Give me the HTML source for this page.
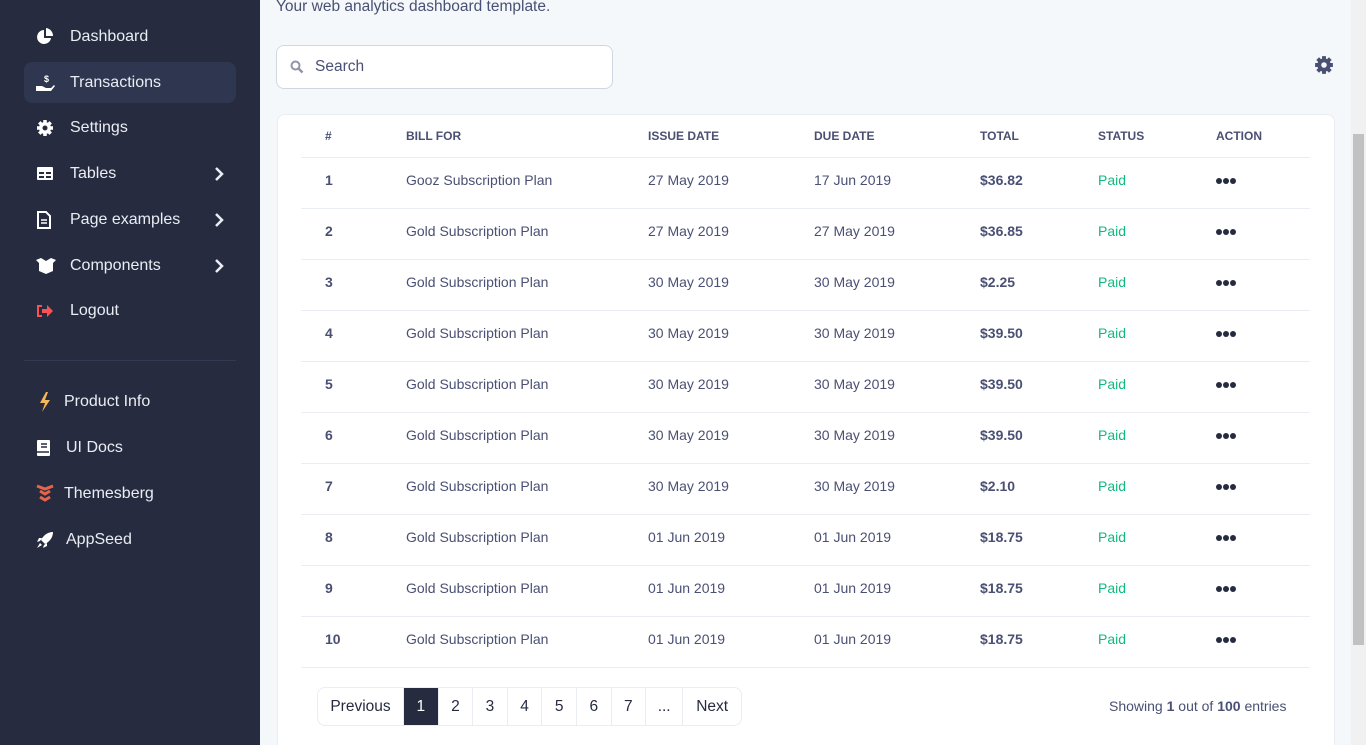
<!DOCTYPE html>
<html><head><meta charset="utf-8"><style>
*{box-sizing:border-box;margin:0;padding:0}
html,body{width:1366px;height:745px;overflow:hidden}
body{background:#f5f8fb;font-family:"Liberation Sans",sans-serif;color:#4a5073;position:relative}
.sb{position:absolute;left:0;top:0;width:260px;height:745px;background:#262b40}
.it{position:absolute;left:24px;width:212px;height:41px;border-radius:8px;color:#eaedf2;font-size:16px;display:flex;align-items:center}
.it.act{background:#2e3650}
.it svg{position:absolute;left:12px}
.it span{position:absolute;left:46px;top:12px}
.it .chev{left:188px;width:10px;height:14px}
.hr{position:absolute;left:24px;top:360px;width:212px;height:1px;background:#323a54}
.sub{position:absolute;left:276px;top:-2px;font-size:15.5px;color:#4a5073}
.search{position:absolute;left:276px;top:45px;width:337px;height:44px;border:1px solid #d1d7e0;border-radius:8px;background:#fff}
.search span{position:absolute;left:38px;top:12px;font-size:15.5px;color:#4a5073}
.card{position:absolute;left:277px;top:114px;width:1058px;height:640px;background:#fff;border:1px solid #eaedf2;border-radius:8px}
table{position:absolute;left:23px;top:0;width:1009px;border-collapse:collapse;font-size:14px}
th{height:42px;text-align:left;font-size:12px;font-weight:bold;color:#4a5073;border-bottom:1px solid #eaedf2;padding-left:24px}
td{height:51px;border-bottom:1px solid #eaedf2;padding-left:24px;color:#4a5073;padding-bottom:6px}
td.b{font-weight:bold}
td.p{color:#10b981}
.dots{display:inline-block;width:6px;height:6px;border-radius:50%;background:#262b40;margin-right:1px;vertical-align:middle}
.pg{position:absolute;left:317px;top:687px;height:39px;display:flex;border:1px solid #eaedf2;border-radius:8px;overflow:hidden;background:#fff}
.pg div{height:37px;line-height:37px;width:34.6px;text-align:center;border-right:1px solid #eaedf2;font-size:15.5px;color:#262b40}
.pg div:last-child{border:none}
.pg .on{background:#262b40;color:#fff}
.show{position:absolute;left:1109px;top:698px;font-size:14px;color:#4a5073}
.scr{position:absolute;left:1351px;top:0;width:15px;height:745px;background:#f1f1f1}
.th{position:absolute;left:1353px;top:134px;width:11px;height:511px;background:#c1c1c1}
</style></head><body>
<div class="sb">
<div class="it" style="top:16px"><svg width="18" height="18" viewBox="0 0 18 18"><path d="M8 2A7 7 0 1 0 15 10H8Z" fill="#fff"/><path d="M10 0V8H17A8 8 0 0 0 10 0Z" fill="#fff"/></svg><span>Dashboard</span></div>
<div class="it act" style="top:62px"><svg width="20" height="18" viewBox="0 0 20 18"><text x="8" y="8" font-size="9" fill="#fff" font-weight="bold">$</text><path d="M0 12h6l4 2h5l3-3 1 1-4 5H0Z" fill="#fff"/></svg><span>Transactions</span></div>
<div class="it" style="top:107px"><svg width="18" height="18" viewBox="0 0 18 18"><circle cx="9" cy="9" r="6" fill="#fff"/><g stroke="#fff" stroke-width="3.5"><path d="M9 1v16M1 9h16M3.3 3.3l11.4 11.4M14.7 3.3L3.3 14.7"/></g><circle cx="9" cy="9" r="2.5" fill="#262b40"/></svg><span>Settings</span></div>
<div class="it" style="top:153px"><svg width="18" height="16" viewBox="0 0 18 16"><rect x="1" y="1" width="16" height="13" rx="1" fill="#fff"/><path d="M3 6h5v2H3zM10 6h5v2h-5zM3 10h5v2H3zM10 10h5v2h-5z" fill="#262b40"/></svg><span>Tables</span><svg class="chev" viewBox="0 0 10 14" style="left:190px"><path d="M2 1l6 6-6 6" stroke="#eaedf2" stroke-width="2.5" fill="none"/></svg></div>
<div class="it" style="top:199px"><svg width="16" height="18" viewBox="0 0 16 18"><path d="M2 1h8l4 4v12H2Z" fill="none" stroke="#fff" stroke-width="2"/><path d="M5 9h6M5 12h6" stroke="#fff" stroke-width="1.5"/></svg><span>Page examples</span><svg class="chev" viewBox="0 0 10 14" style="left:190px"><path d="M2 1l6 6-6 6" stroke="#eaedf2" stroke-width="2.5" fill="none"/></svg></div>
<div class="it" style="top:245px"><svg width="20" height="16" viewBox="0 0 20 16"><path d="M0 2l5-2 5 3 5-3 5 2-3 3v8l-7 3-7-3V5Z" fill="#fff"/></svg><span>Components</span><svg class="chev" viewBox="0 0 10 14" style="left:190px"><path d="M2 1l6 6-6 6" stroke="#eaedf2" stroke-width="2.5" fill="none"/></svg></div>
<div class="it" style="top:290px"><svg width="18" height="16" viewBox="0 0 18 16"><path d="M1 2h5v2H3v8h3v2H1Z M6 6h5V2l6 6-6 6v-4H6Z" fill="#fa5252"/></svg><span>Logout</span></div>
<div class="hr"></div>
<div class="it" style="top:381px"><svg width="14" height="20" viewBox="0 0 14 20" style="left:14px"><path d="M8 0L2 11h5l-3 9 8-12H7l3-8Z" fill="#f5b759"/></svg><span style="left:40px">Product Info</span></div>
<div class="it" style="top:427px"><svg width="16" height="18" viewBox="0 0 16 18" style="left:12px"><rect x="1" y="1" width="13" height="16" rx="1" fill="#fff"/><path d="M5 5h6M5 8h6" stroke="#262b40" stroke-width="1.5"/><path d="M1 13h12" stroke="#262b40" stroke-width="1.5"/></svg><span style="left:42px">UI Docs</span></div>
<div class="it" style="top:473px"><svg width="18" height="20" viewBox="0 0 18 20" style="left:12px"><path d="M1 2l8 3 8-3M4 7l5 3 5-3M4 13l5 3 5-3" stroke="#e5654b" stroke-width="3" fill="none"/></svg><span style="left:40px">Themesberg</span></div>
<div class="it" style="top:519px"><svg width="18" height="18" viewBox="0 0 18 18" style="left:12px"><path d="M17 1C11 1 7 5 5 9l4 4c4-2 8-6 8-12Z M4 10l-3 1 2-4h3Z M8 14l-1 3 4-2v-3Z M4 12l-3 5 5-3Z" fill="#fff"/></svg><span style="left:42px">AppSeed</span></div>
</div>
<div class="sub">Your web analytics dashboard template.</div>
<div class="search"><svg width="14" height="14" viewBox="0 0 14 14" style="position:absolute;left:13px;top:14px"><circle cx="5.5" cy="5.5" r="4" fill="none" stroke="#8f95aa" stroke-width="2"/><path d="M8.5 8.5l4 4" stroke="#8f95aa" stroke-width="2.5"/></svg><span>Search</span></div>
<svg width="20" height="20" viewBox="0 0 18 18" style="position:absolute;left:1314px;top:55px"><circle cx="9" cy="9" r="6" fill="#4a5073"/><g stroke="#4a5073" stroke-width="3.5"><path d="M9 1v16M1 9h16M3.3 3.3l11.4 11.4M14.7 3.3L3.3 14.7"/></g><circle cx="9" cy="9" r="2.5" fill="#f5f8fb"/></svg>
<div class="card"><table>
<tr><th style="width:81px">#</th><th style="width:242px">BILL FOR</th><th style="width:166px">ISSUE DATE</th><th style="width:166px">DUE DATE</th><th style="width:118px">TOTAL</th><th style="width:118px">STATUS</th><th>ACTION</th></tr>
<tr><td class="b">1</td><td>Gooz Subscription Plan</td><td>27 May 2019</td><td>17 Jun 2019</td><td class="b">$36.82</td><td class="p">Paid</td><td><i class="dots"></i><i class="dots"></i><i class="dots"></i></td></tr>
<tr><td class="b">2</td><td>Gold Subscription Plan</td><td>27 May 2019</td><td>27 May 2019</td><td class="b">$36.85</td><td class="p">Paid</td><td><i class="dots"></i><i class="dots"></i><i class="dots"></i></td></tr>
<tr><td class="b">3</td><td>Gold Subscription Plan</td><td>30 May 2019</td><td>30 May 2019</td><td class="b">$2.25</td><td class="p">Paid</td><td><i class="dots"></i><i class="dots"></i><i class="dots"></i></td></tr>
<tr><td class="b">4</td><td>Gold Subscription Plan</td><td>30 May 2019</td><td>30 May 2019</td><td class="b">$39.50</td><td class="p">Paid</td><td><i class="dots"></i><i class="dots"></i><i class="dots"></i></td></tr>
<tr><td class="b">5</td><td>Gold Subscription Plan</td><td>30 May 2019</td><td>30 May 2019</td><td class="b">$39.50</td><td class="p">Paid</td><td><i class="dots"></i><i class="dots"></i><i class="dots"></i></td></tr>
<tr><td class="b">6</td><td>Gold Subscription Plan</td><td>30 May 2019</td><td>30 May 2019</td><td class="b">$39.50</td><td class="p">Paid</td><td><i class="dots"></i><i class="dots"></i><i class="dots"></i></td></tr>
<tr><td class="b">7</td><td>Gold Subscription Plan</td><td>30 May 2019</td><td>30 May 2019</td><td class="b">$2.10</td><td class="p">Paid</td><td><i class="dots"></i><i class="dots"></i><i class="dots"></i></td></tr>
<tr><td class="b">8</td><td>Gold Subscription Plan</td><td>01 Jun 2019</td><td>01 Jun 2019</td><td class="b">$18.75</td><td class="p">Paid</td><td><i class="dots"></i><i class="dots"></i><i class="dots"></i></td></tr>
<tr><td class="b">9</td><td>Gold Subscription Plan</td><td>01 Jun 2019</td><td>01 Jun 2019</td><td class="b">$18.75</td><td class="p">Paid</td><td><i class="dots"></i><i class="dots"></i><i class="dots"></i></td></tr>
<tr><td class="b">10</td><td>Gold Subscription Plan</td><td>01 Jun 2019</td><td>01 Jun 2019</td><td class="b">$18.75</td><td class="p">Paid</td><td><i class="dots"></i><i class="dots"></i><i class="dots"></i></td></tr>
</table></div>
<div class="pg"><div style="width:86px">Previous</div><div class="on">1</div><div>2</div><div>3</div><div>4</div><div>5</div><div>6</div><div>7</div><div style="width:37px">...</div><div style="width:58px">Next</div></div>
<div class="show">Showing <b>1</b> out of <b>100</b> entries</div>
<div class="scr"></div><div class="th"></div>
</body></html>
